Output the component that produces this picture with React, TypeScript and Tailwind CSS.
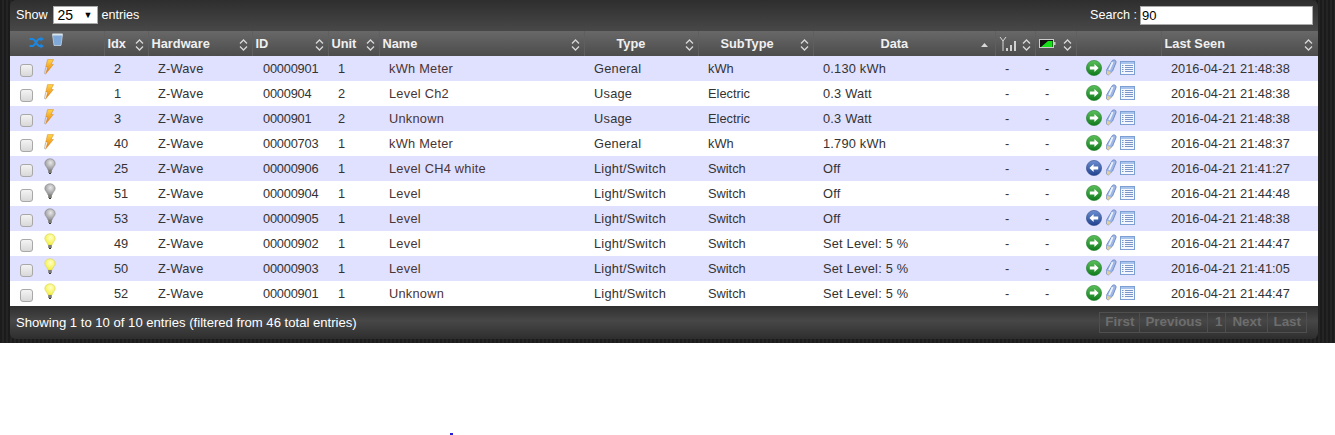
import React from "react";

const rows = [
  ["bolt", "2", "00000901", "1", "kWh Meter", "General", "kWh", "0.130 kWh", "r", "2016-04-21 21:48:38"],
  ["bolt", "1", "0000904", "2", "Level Ch2", "Usage", "Electric", "0.3 Watt", "r", "2016-04-21 21:48:38"],
  ["bolt", "3", "0000901", "2", "Unknown", "Usage", "Electric", "0.3 Watt", "r", "2016-04-21 21:48:38"],
  ["bolt", "40", "00000703", "1", "kWh Meter", "General", "kWh", "1.790 kWh", "r", "2016-04-21 21:48:37"],
  ["off", "25", "00000906", "1", "Level CH4 white", "Light/Switch", "Switch", "Off", "l", "2016-04-21 21:41:27"],
  ["off", "51", "00000904", "1", "Level", "Light/Switch", "Switch", "Off", "r", "2016-04-21 21:44:48"],
  ["off", "53", "00000905", "1", "Level", "Light/Switch", "Switch", "Off", "l", "2016-04-21 21:48:38"],
  ["on", "49", "00000902", "1", "Level", "Light/Switch", "Switch", "Set Level: 5 %", "r", "2016-04-21 21:44:47"],
  ["on", "50", "00000903", "1", "Level", "Light/Switch", "Switch", "Set Level: 5 %", "r", "2016-04-21 21:41:05"],
  ["on", "52", "00000901", "1", "Unknown", "Light/Switch", "Switch", "Set Level: 5 %", "r", "2016-04-21 21:44:47"],
];

const widths = [94, 44, 104, 76, 51, 205, 114, 115, 182, 40, 41, 85, 157];

function Sort({ up, pos = "right-[4px]" }: { up?: boolean; pos?: string }) {
  return (
    <svg width="9" height="12" viewBox="0 0 9 12" className={`absolute top-[8px] ${pos}`}>
      {up ? (
        <path d="M1 8 L4.5 4 L8 8 Z" fill="#d8d8d8" />
      ) : (
        <path d="M1 4.5 L4.5 1 L8 4.5 M1 7.5 L4.5 11 L8 7.5" fill="none" stroke="#d8d8d8" strokeWidth="1.3" />
      )}
    </svg>
  );
}

function Bolt() {
  return (
    <svg width="10" height="16" viewBox="0 0 10 16">
      <defs>
        <linearGradient id="bo" x1="0" y1="0" x2="0" y2="1">
          <stop offset="0" stopColor="#ffd84a" />
          <stop offset="1" stopColor="#e8780c" />
        </linearGradient>
      </defs>
      <path d="M3.5 0.6 L9.6 0.6 L7 5.4 L9.4 5.4 L2 14.6 L3.6 8 L1.8 8 Z" fill="url(#bo)" stroke="#d0861e" strokeWidth="0.5" />
      <path d="M2 15 L0.6 14.6 L1.6 8.4" fill="none" stroke="#b0b0b0" strokeWidth="0.9" />
    </svg>
  );
}

function Bulb({ on }: { on: boolean }) {
  const id = on ? "bon" : "boff";
  return (
    <svg width="12" height="17" viewBox="0 0 12 17">
      <defs>
        <radialGradient id={id} cx="0.55" cy="0.35" r="0.65">
          <stop offset="0" stopColor={on ? "#ffffc8" : "#e8e8e8"} />
          <stop offset="1" stopColor={on ? "#f3ef3a" : "#8e8e92"} />
        </radialGradient>
      </defs>
      <path d="M6 0.8 C9 0.8 11.2 2.8 11.2 5.6 C11.2 8 8.6 9.2 8 12 L4 12 C3.4 9.2 0.8 8 0.8 5.6 C0.8 2.8 3 0.8 6 0.8 Z" fill={`url(#${id})`} stroke={on ? "#d8d35a" : "#8b8b8f"} strokeWidth="0.6" />
      <rect x="4.2" y="12" width="3.6" height="3" fill="#7c7c74" />
      <rect x="5" y="15" width="2" height="1" fill="#333" />
    </svg>
  );
}

function Go({ left }: { left: boolean }) {
  const id = left ? "gl" : "gr";
  return (
    <svg width="16" height="16" viewBox="0 0 16 16">
      <defs>
        <linearGradient id={id} x1="0" y1="0" x2="0" y2="1">
          <stop offset="0" stopColor={left ? "#6d8fd0" : "#5cc05a"} />
          <stop offset="1" stopColor={left ? "#1f418e" : "#0f7a1c"} />
        </linearGradient>
      </defs>
      <circle cx="8" cy="8" r="7.6" fill={`url(#${id})`} stroke={left ? "#2d4a8a" : "#1c7d2a"} strokeWidth="0.6" />
      <path
        d={left ? "M3.4 8 L7.6 4 L7.6 6.4 L12.2 6.4 L12.2 9.6 L7.6 9.6 L7.6 12 Z" : "M12.6 8 L8.4 4 L8.4 6.4 L3.8 6.4 L3.8 9.6 L8.4 9.6 L8.4 12 Z"}
        fill="#fff"
      />
    </svg>
  );
}

function Pencil() {
  return (
    <svg width="12" height="17" viewBox="0 0 12 17">
      <path d="M7.4 1.4 C9 0.2 11.6 1.2 11 3.6 L7.6 12 L3.2 16 L1.6 15 L1.8 10.6 Z" fill="#9fb7e6" stroke="#6a88c6" strokeWidth="0.9" />
      <path d="M7.6 3.2 L4.2 11" stroke="#eef3fc" strokeWidth="1.8" />
      <path d="M1.9 11.4 L6 13.6 L3.2 16 L1.7 15 Z" fill="#e4cf9a" />
    </svg>
  );
}

function ListIcon() {
  return (
    <svg width="15" height="14" viewBox="0 0 15 14">
      <rect x="0.5" y="0.5" width="14" height="13" fill="#f4f7fd" stroke="#7d9fd4" />
      <rect x="1" y="1" width="13" height="2" fill="#a9c4ec" />
      <path d="M2 4.5 H3.5 M5 4.5 H13 M2 6.5 H3.5 M5 6.5 H13 M2 8.5 H3.5 M5 8.5 H13 M2 10.5 H3.5 M5 10.5 H13" stroke="#7a97c8" strokeWidth="1" />
    </svg>
  );
}

function HeadCell({ label, up, pad = "pl-[3px]", sort = true, pos }: { label?: React.ReactNode; up?: boolean; pad?: string; sort?: boolean; pos?: string }) {
  return (
    <th className={`relative h-[25px] border-l border-[#5f5f5f] pr-[14px] text-left font-bold text-[#f0f0f0] ${pad}`}>
      {label}
      {sort && <Sort up={up} pos={pos} />}
    </th>
  );
}

export default function App() {
  return (
    <div className="relative h-[435px] w-[1335px] overflow-hidden bg-white font-['Liberation_Sans',Arial,sans-serif]">
      <div className="h-[343px] w-full bg-[repeating-linear-gradient(90deg,#1b1b1b_0px,#1b1b1b_2px,#242424_2px,#242424_4px)] pl-[10px]">
        <div className="w-[1308px] overflow-hidden rounded-[6px]">
          <div className="flex h-[31px] items-center justify-between bg-[linear-gradient(#2e2e2e,#484848)] pl-[6px] pr-[5px] text-[12.6px] text-white">
            <div className="flex items-center">
              <span>Show</span>
              <span className="ml-[5px] mr-[4px] flex h-[18px] w-[45px] items-center justify-between border border-[#aaa] bg-white pl-[4px] pr-[4px] text-[14px] text-black">
                25
                <span className="text-[9px]">▼</span>
              </span>
              <span>entries</span>
            </div>
            <div className="flex items-center">
              <span className="mr-[3px] text-[12.6px]">Search :</span>
              <span className="flex h-[19px] w-[173px] items-center border border-[#aaa] bg-white pl-px text-[13px] text-black">90</span>
            </div>
          </div>

          <table className="w-[1308px] table-fixed border-collapse text-[12.8px] text-[#333]">
            <colgroup>
              {widths.map((w, i) => (
                <col key={i} style={{ width: w }} />
              ))}
            </colgroup>
            <thead>
              <tr className="bg-[linear-gradient(#686868,#5a5a5a_50%,#4c4c4c)]">
                <th className="h-[25px] pl-[19px] text-left align-top">
                  <div className="flex items-start gap-[8px] pt-[2px]">
                    <svg width="15" height="13" viewBox="0 0 15 13" className="mt-[3px]">
                      <path d="M0.5 3 H3.5 C6.5 3 7.5 10 10.5 10 H12 M0.5 10 H3.5 C6.5 10 7.5 3 10.5 3 H12" fill="none" stroke="#1b87e0" strokeWidth="2" />
                      <path d="M11.5 0.5 L15 3 L11.5 5.5 Z M11.5 7.5 L15 10 L11.5 12.5 Z" fill="#1b87e0" />
                    </svg>
                    <svg width="11" height="13" viewBox="0 0 11 13">
                      <path d="M0.5 1.5 H10.5 L9 12.5 H2 Z" fill="#7fa9d8" stroke="#c6d3e0" strokeWidth="0.8" />
                      <rect x="0.5" y="0.5" width="10" height="2" fill="#dbe3ea" />
                    </svg>
                  </div>
                </th>
                <HeadCell label="Idx" />
                <HeadCell label="Hardware" />
                <HeadCell label="ID" />
                <HeadCell label="Unit" />
                <HeadCell label="Name" />
                <HeadCell label="Type" pad="pl-[32px]" />
                <HeadCell label="SubType" pad="pl-[22px]" />
                <HeadCell label="Data" up pad="pl-[67px]" pos="right-[6px]" />
                <HeadCell
                  label={
                    <svg width="18" height="16" viewBox="0 0 18 16">
                      <path d="M1 1 L4 5 L7 1 M4 5 V15" fill="none" stroke="#d8d8d8" strokeWidth="1" />
                      <path d="M7 12 H9 V15 H7 Z M11 9 H13 V15 H11 Z M15 5 H17 V15 H15 Z" fill="#d0d0d0" />
                    </svg>
                  }
                />
                <HeadCell
                  label={
                    <svg width="17" height="10" viewBox="0 0 17 10">
                      <rect x="0.5" y="0.5" width="14" height="8" fill="#111" stroke="#ccc" />
                      <path d="M2 8 L13.5 8 L13.5 2 L9 2 Z" fill="#18e018" />
                      <rect x="15" y="3" width="1.5" height="3" fill="#ccc" />
                    </svg>
                  }
                />
                <HeadCell sort={false} />
                <HeadCell label="Last Seen" pos="right-[5px]" />
              </tr>
            </thead>
            <tbody>
              {rows.map((r, i) => (
                <tr key={i} className={`h-[25px] ${i % 2 === 0 ? "bg-[#e0e0ff]" : "bg-white"}`}>
                  <td className="p-0">
                    <div className="flex items-center pl-[10px]">
                      <span className="mt-[3px] h-[13px] w-[13px] rounded-[3px] border border-[#a8a8a8] bg-[linear-gradient(#f4f4f4,#d8d8d8)]" />
                      <span className="mb-[4px] ml-[11px] flex">
                        {r[0] === "bolt" ? <Bolt /> : <Bulb on={r[0] === "on"} />}
                      </span>
                    </div>
                  </td>
                  <td className="pl-[10px]">{r[1]}</td>
                  <td className="pl-[10px] tracking-[0.2px]">Z-Wave</td>
                  <td className="pl-[11px] tracking-[-0.2px]">{r[2]}</td>
                  <td className="pl-[10px]">{r[3]}</td>
                  <td className="pl-[10px] tracking-[0.25px] text-[#4a3434]">{r[4]}</td>
                  <td className="pl-[10px] tracking-[0.25px]">{r[5]}</td>
                  <td className="pl-[10px]">{r[6]}</td>
                  <td className="pl-[10px] tracking-[0.2px]">{r[7]}</td>
                  <td className="pl-[10px]">-</td>
                  <td className="pl-[10px]">-</td>
                  <td className="p-0">
                    <div className="flex items-center gap-[3px] pb-[2px] pl-[10px]">
                      <Go left={r[8] === "l"} />
                      <Pencil />
                      <ListIcon />
                    </div>
                  </td>
                  <td className="pl-[10px]">{r[9]}</td>
                </tr>
              ))}
            </tbody>
          </table>

          <div className="flex h-[33px] items-center justify-between bg-[linear-gradient(#2f2f2f,#474747_45%,#2e2e2e)] pl-[6px] pr-[11px] text-[13.1px] text-white">
            <span>Showing 1 to 10 of 10 entries (filtered from 46 total entries)</span>
            <div className="flex h-[21px] border border-[#4f4f4f] text-[13.4px] font-bold text-[#6d6d6d]">
              <span className="flex items-center pl-[5px] pr-[5px]">First</span>
              <span className="flex items-center border-l border-[#4f4f4f] pl-[5px] pr-[5px]">Previous</span>
              <span className="flex items-center border-l border-[#4f4f4f] pl-[7px] pr-[3px]">1</span>
              <span className="flex items-center border-l border-[#4f4f4f] px-[6px]">Next</span>
              <span className="flex items-center border-l border-[#4f4f4f] px-[5px]">Last</span>
            </div>
          </div>
        </div>
      </div>
      <span className="absolute left-[450px] top-[433px] h-[2px] w-[3px] bg-[#2222dd]" />
    </div>
  );
}
